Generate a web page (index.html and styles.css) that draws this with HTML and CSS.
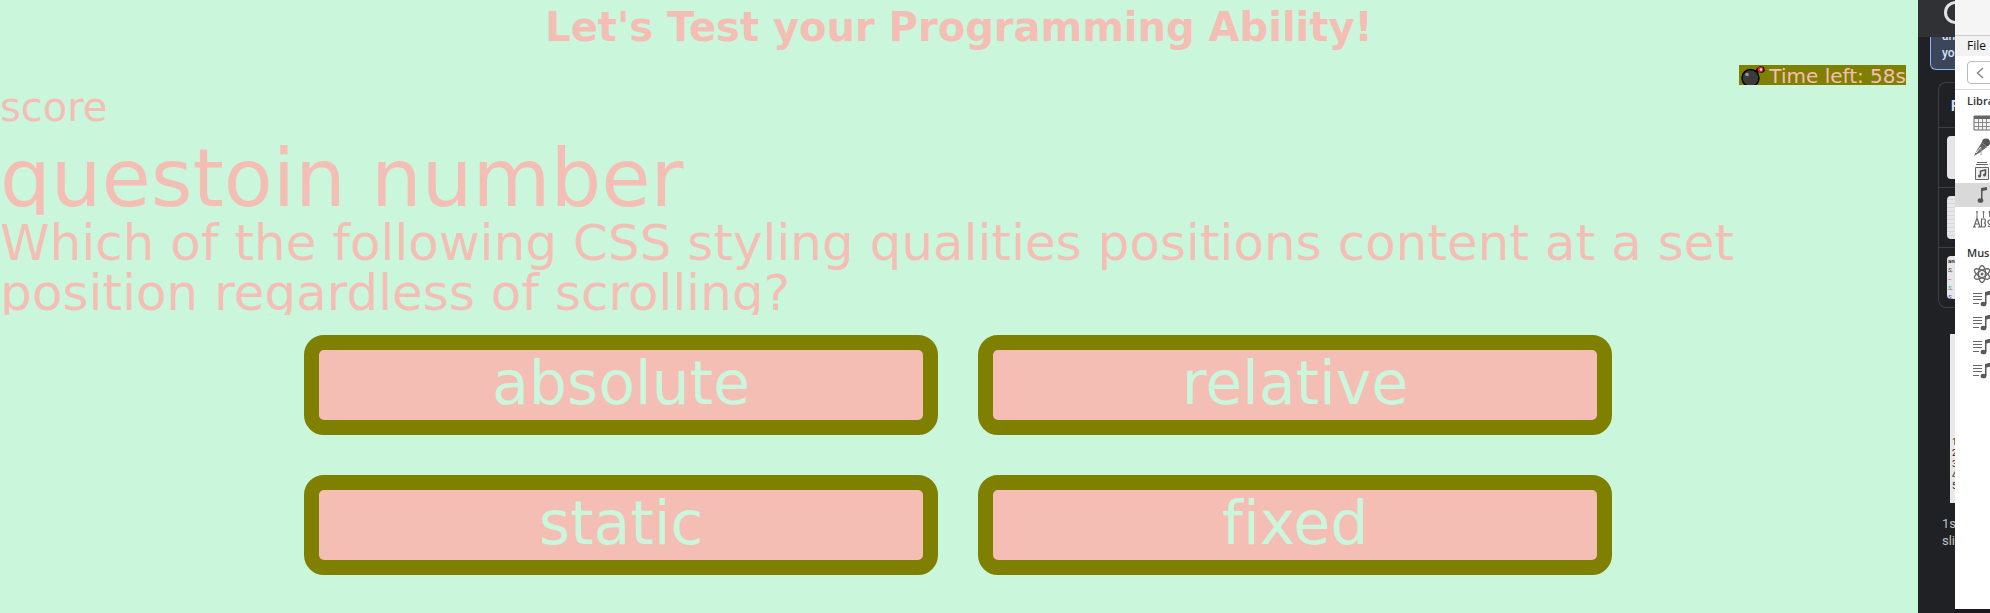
FILE: index.html
```html
<!DOCTYPE html>
<html lang="en">
<head>
<meta charset="utf-8">
<title>Let's Test your Programming Ability!</title>
<link rel="stylesheet" href="styles.css">
</head>
<body>
<svg width="0" height="0" class="defs" aria-hidden="true">
  <symbol id="playlist" viewBox="0 0 24 18">
    <path d="M0 4.500h9M0 7.500h9M0 10.500h9M0 14.500h6" stroke="#666" stroke-width="1" fill="none"/>
    <path d="M12 15V3L20 1v4L13.500 6.500V15" fill="#5a5a5a"/>
    <ellipse cx="10.500" cy="15" rx="2.900" ry="2.300" fill="#5a5a5a"/>
  </symbol>
</svg>
<main class="quiz">
  <h1 class="title">Let's Test your Programming Ability!</h1>
  <div class="timer">
    <svg class="bomb" viewBox="0 0 24 20" aria-hidden="true">
      <path d="M15 7l4-3" stroke="#111" stroke-width="4"/>
      <circle cx="9.500" cy="13" r="8.500" fill="#3b3b3b" stroke="#000" stroke-width="1.500"/>
      <circle cx="6" cy="9.500" r="1.800" fill="#8c9aa2"/>
      <path d="M15 4l4-3 4 1 1 4-3 2-4-1z" fill="#111"/>
      <circle cx="19.500" cy="4.500" r="2.800" fill="#e22"/>
      <circle cx="20" cy="4.500" r="1.200" fill="#bff4ff"/>
    </svg><span>Time left: 58s</span>
  </div>
  <p class="score">score</p>
  <h2 class="number">questoin number</h2>
  <p class="question">Which of the following CSS styling qualities positions content at a set position regardless of scrolling?</p>
  <div class="answers">
    <button class="answer">absolute</button>
    <button class="answer">relative</button>
    <button class="answer">static</button>
    <button class="answer">fixed</button>
  </div>
</main>
<aside class="browser">
  <div class="browser-bar"><span class="ring"></span></div>
  <div class="notice">and<br>you</div>
  <div class="files">
    <div class="files-head">F</div>
    <div class="file"><span class="thumb"></span></div>
    <div class="file"><span class="thumb lines"></span></div>
    <div class="file"><span class="thumb notes"><b>ana</b><i>S,</i><i class="red">--</i><i class="green">S,</i><i class="blue">S,</i></span></div>
  </div>
  <div class="slide">1<br>2<br>3<br>4<br>5</div>
  <p class="caption">1st<br>slide</p>
</aside>
<aside class="player">
  <div class="player-title"></div>
  <div class="menu">File</div>
  <div class="nav"><button class="back" aria-label="Back"><svg viewBox="0 0 8 12" width="8" height="12"><path d="M7 1L1.500 6L7 11" fill="none" stroke="#888" stroke-width="1.500"/></svg></button></div>
  <h3 class="heading">Library</h3>
  <div class="row"><svg viewBox="0 0 24 18"><path d="M1 2h24v14H1z" fill="#f4f4f4" stroke="#666"/><path d="M1 2h24v3H1z" fill="#666"/><path d="M1 8.500h24M1 12.500h24M5.500 5v11M9.500 5v11M13.500 5v11M17.500 5v11" stroke="#888"/></svg></div>
  <div class="row"><svg viewBox="0 0 24 18"><path d="M9 4l5 5-8 6-5 3 3-6z" fill="#666"/><path d="M8 9l-5 6" stroke="#fff"/><circle cx="13" cy="4.500" r="4" fill="#555"/><path d="M8.500 4l5 5M8 10v7" stroke="#999"/></svg></div>
  <div class="row"><svg viewBox="0 0 24 18"><path d="M4 .5h10M3 2.500h12" stroke="#666"/><path d="M2.500 5.500h13v12h-13z" fill="#eee" stroke="#666"/><path d="M7.500 14V9l5-1v5" fill="none" stroke="#555" stroke-width="1.500"/><circle cx="6.500" cy="14" r="1.500" fill="#555"/><circle cx="11.500" cy="13" r="1.500" fill="#555"/></svg></div>
  <div class="row selected"><svg viewBox="0 0 24 18"><path d="M8 14V2l6-1v3L9.500 5v9" fill="#555"/><ellipse cx="7.500" cy="14.500" rx="2.800" ry="2.300" fill="#555"/></svg></div>
  <div class="row"><svg viewBox="0 0 24 18"><path d="M4 1v6M10.500 1v7M16.500 1v6M22 1v6" stroke="#777"/><path d="M3 2h2M9.500 2h2M15.500 2h2M0 17h3M5 17h3M1 17L4 8l3 9M2 14h4M8.500 9v8h3q2-2 0-4q2-2 0-4zM19 11q-4-2-4 1t4 3q0 3-4 1" fill="none" stroke="#666" stroke-width="1.200"/></svg></div>
  <h3 class="heading music">Music</h3>
  <div class="row"><svg viewBox="0 0 24 18"><g fill="none" stroke="#666" stroke-width="1.300"><ellipse cx="9" cy="9" rx="3.500" ry="8.500"/><ellipse cx="9" cy="9" rx="3.500" ry="8.500" transform="rotate(60 9 9)"/><ellipse cx="9" cy="9" rx="3.500" ry="8.500" transform="rotate(120 9 9)"/></g><circle cx="9" cy="9" r="1.500" fill="#666"/></svg></div>
  <div class="row"><svg><use href="#playlist"/></svg></div>
  <div class="row"><svg><use href="#playlist"/></svg></div>
  <div class="row"><svg><use href="#playlist"/></svg></div>
  <div class="row"><svg><use href="#playlist"/></svg></div>
</aside>
</body>
</html>
```
FILE: styles.css
```css
* { box-sizing: border-box; }
body {
  margin: 0;
  min-height: 100vh;
  display: grid;
  grid-template-columns: minmax(0, 1fr) 37px 35px;
  background: #1c1a20;
  overflow: hidden;
}
.defs { position: absolute; }
h1, h2, h3, p { margin: 0; font-weight: normal; }

.quiz {
  background: #caf6dc;
  color: #f5beb5;
  font-family: Verdana, "DejaVu Sans", sans-serif;
  display: flex;
  flex-direction: column;
  overflow: hidden;
}
.title {
  padding-top: 5px;
  height: 65px;
  font-size: 40px;
  line-height: 44px;
  font-weight: bold;
  text-align: center;
}
.timer {
  align-self: flex-end;
  margin-right: 12px;
  padding-left: 2px;
  height: 20px;
  display: flex;
  gap: 4px;
  font-size: 20px;
  line-height: 22px;
  background: #808000;
  overflow: hidden;
}
.bomb { width: 24px; height: 20px; }
.score { height: 50px; font-size: 40px; line-height: 44px; }
.number { height: 80px; font-size: 80px; line-height: 88px; overflow: hidden; }
.question {
  padding: 3px 100px 0 0;
  height: 100px;
  font-size: 50px;
  line-height: 50px;
  overflow: hidden;
}
.answers {
  padding: 20px 306px 0 304px;
  display: grid;
  grid-template-columns: 1fr 1fr;
  gap: 40px;
}
.answer {
  height: 100px;
  padding: 0 0 4px;
  border: 15px solid #808000;
  border-radius: 20px;
  background: #f5beb5;
  color: #caf6dc;
  font: 60px/66px Verdana, "DejaVu Sans", sans-serif;
  font-variant-ligatures: none;
}

.browser {
  background: #202124;
  overflow: hidden;
  font-family: Roboto, sans-serif;
  color: #bdc1c6;
}
.browser-bar { height: 37px; padding: 1px 0 0 26px; background: #303134; overflow: hidden; }
.ring { display: block; width: 23px; height: 23px; border: 3px solid #e2e2e4; border-radius: 50%; }
.notice {
  height: 33px;
  margin-left: 12px;
  padding-left: 11px;
  border: 1px solid #8ab4f8;
  border-width: 0 0 1px 1px;
  border-radius: 0 0 0 6px;
  background: #3b4658;
  color: #d2e3fc;
  font-size: 12px;
  line-height: 17px;
  font-weight: 500;
  display: flex;
  align-items: flex-end;
  padding-bottom: 7px;
  overflow: hidden;
}
.files {
  margin: 12px 0 0 20px;
  border: 1px solid #3c4043;
  border-right: 0;
  border-radius: 8px 0 0 8px;
  overflow: hidden;
}
.files-head { height: 44px; padding-left: 12px; font-size: 14px; line-height: 46px; font-weight: bold; color: #d2e3fc; }
.file { height: 60px; padding: 8px 0 0 8px; border-top: 1px solid #3c4043; }
.thumb { display: block; height: 43px; border-radius: 4px 0 0 4px; background: #e6e6e8; overflow: hidden; font-size: 6px; line-height: 9px; color: #333; }
.thumb b, .thumb i { display: block; padding-left: 1px; }
.lines { background: repeating-linear-gradient(#e6e6e8 0 3px, #d6d6d9 3px 4px); }
.red { color: #d33; }
.green { color: #397; }
.blue { color: #33c; }
.slide {
  height: 169px;
  margin: 26px 0 0 32px;
  padding: 103px 0 0 2px;
  background: #e8e8e8;
  color: #222;
  font-size: 9px;
  line-height: 11px;
  overflow: hidden;
}
.caption { padding: 12px 0 0 24px; font-size: 13px; line-height: 17px; }

.player {
  margin-bottom: 4px;
  background: #fff;
  overflow: hidden;
  font-family: "Segoe UI", "Open Sans", sans-serif;
  color: #111;
}
.player-title { height: 36px; background: #f5f5f5; border-bottom: 1px solid #ccc; }
.menu { height: 20px; padding-left: 12px; background: #f2f2f2; font-size: 12px; line-height: 19px; }
.nav { height: 34px; padding: 5px 0 0 12px; border-bottom: 1px solid #d8d8d8; }
.back { width: 32px; height: 23px; padding: 0 0 0 8px; display: flex; align-items: center; border: 1px solid #bbb; border-radius: 4px; background: #fff; }
.heading { height: 21px; padding-left: 12px; font-size: 11px; line-height: 22px; font-weight: 600; color: #333; }
.music { margin-top: 11px; height: 20px; }
.row { height: 24px; padding: 3px 0 0 18px; }
.row svg { display: block; width: 24px; height: 18px; }
.selected { background: #d9d9d9; }
```
